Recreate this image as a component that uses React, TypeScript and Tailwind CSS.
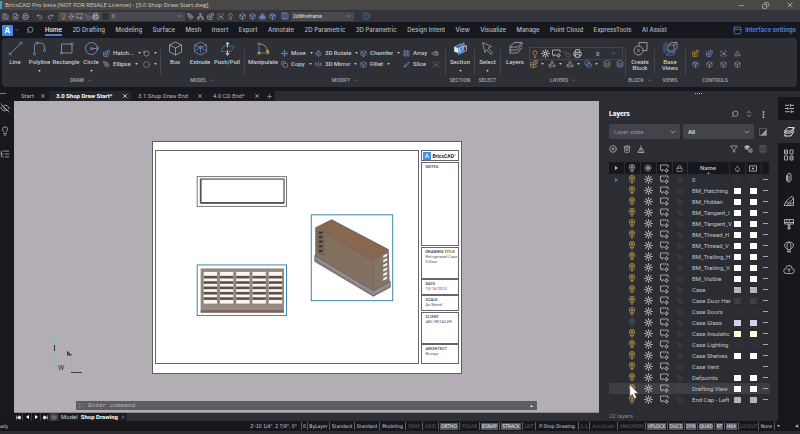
import React, { useState } from 'react';
import { clsx } from 'clsx';
import {
  Save, FileSearch, Printer, Undo2, Redo2, Lightbulb, Sun, LockOpen, Lock, Search, ChevronDown, ChevronsUpDown,
  PenTool, Network, Blocks, ScanSearch, Box, Boxes, Package, Columns3, CircleHelp, Minus, Copy, X, Plus,
  PanelTop, Move, Rotate3d, FlipHorizontal2, LayoutGrid, EyeOff,
  EllipsisVertical, CirclePlus, Trash2, Funnel, Layers, Droplet, SlidersHorizontal, ListTree, Paintbrush,
  Shapes, SkipBack, SkipForward, Slice, RotateCcw, Circle, Blend, MousePointer2, Sheet,
} from 'lucide-react';

type Icon = React.ComponentType<{ size?: number; className?: string; strokeWidth?: number }>;

const menuTabs = [
  'Home', '2D Drafting', 'Modeling', 'Surface', 'Mesh', 'Insert', 'Export', 'Annotate', '2D Parametric',
  '3D Parametric', 'Design Intent', 'View', 'Visualize', 'Manage', 'Point Cloud', 'ExpressTools', 'AI Assist',
];

interface LayerRow {
  name: string;
  color: string;
  off?: boolean;
}

const layers: LayerRow[] = [
  { name: '0', color: 'bg-[#303136]' },
  { name: 'BM_Hatching', color: 'bg-white' },
  { name: 'BM_Hidden', color: 'bg-white' },
  { name: 'BM_Tangent_I', color: 'bg-white' },
  { name: 'BM_Tangent_V', color: 'bg-white' },
  { name: 'BM_Thread_H', color: 'bg-white' },
  { name: 'BM_Thread_V', color: 'bg-white' },
  { name: 'BM_Trailing_H', color: 'bg-white' },
  { name: 'BM_Trailing_V', color: 'bg-white' },
  { name: 'BM_Visible', color: 'bg-white' },
  { name: 'Case', color: 'bg-[#b9b4b4]' },
  { name: 'Case Door Har', color: 'bg-[#3d3e43]' },
  { name: 'Case Doors', color: 'bg-[#303136]' },
  { name: 'Case Glass', color: 'bg-[#cdd3e2]', off: true },
  { name: 'Case Insulatic', color: 'bg-[#ffffd8]' },
  { name: 'Case Lighting', color: 'bg-[#303136]' },
  { name: 'Case Shelves', color: 'bg-white' },
  { name: 'Case Vent', color: 'bg-[#2d2e33]' },
  { name: 'Defpoints', color: 'bg-white' },
  { name: 'Drafting View', color: 'bg-white' },
  { name: 'End Cap - Left', color: 'bg-[#b9b1b1]' },
];

const statusItems = [
  { label: "2'-10 1/4\", 2 7/8\", 0\"", width: 'w-[56px]' },
  { label: '0', width: 'w-[6px]' },
  { label: 'ByLayer', width: 'w-[22px]' },
  { label: 'Standard', width: 'w-[25px]' },
  { label: 'Standard', width: 'w-[25px]' },
  { label: 'Modeling', width: 'w-[26px]' },
  { label: 'SNAP', width: 'w-[17px]', kind: 'off' },
  { label: 'GRID', width: 'w-[16px]', kind: 'off' },
  { label: 'ORTHO', width: 'w-[21px]', kind: 'on' },
  { label: 'POLAR', width: 'w-[20px]', kind: 'off' },
  { label: 'ESNAP', width: 'w-[20px]', kind: 'on' },
  { label: 'STRACK', width: 'w-[23px]', kind: 'on' },
  { label: 'LWT', width: 'w-[13px]', kind: 'off' },
  { label: 'P:Shop Drawing', width: 'w-[43px]' },
  { label: '1:1', width: 'w-[11px]', kind: 'off' },
  { label: 'AutoScale', width: 'w-[28px]', kind: 'off' },
  { label: 'ANNOMON', width: 'w-[28px]', kind: 'off' },
  { label: 'VPLOCK', width: 'w-[22px]', kind: 'on' },
  { label: 'DUCS', width: 'w-[17px]', kind: 'on' },
  { label: 'DYN', width: 'w-[13px]', kind: 'on' },
  { label: 'QUAD', width: 'w-[17px]', kind: 'on' },
  { label: 'RT', width: 'w-[10px]', kind: 'on' },
  { label: 'HKA', width: 'w-[14px]', kind: 'on' },
  { label: 'LOCKUT', width: 'w-[20px]', kind: 'off' },
  { label: 'None', width: 'w-[16px]' },
];

const Caret: React.FC<{ className?: string }> = ({ className }) => (
  <svg viewBox="0 0 4 3" className={clsx('h-[2px] w-[3px] shrink-0', className)} fill="currentColor">
    <path d="M0 0h4L2 3z" />
  </svg>
);

// Rectangle with a small sun in its corner (viewport freeze)
const ViewportIcon: React.FC<{ size?: number; className?: string }> = ({ size = 9, className }) => (
  <svg viewBox="0 0 18 18" width={size} height={size} className={className} fill="none" stroke="currentColor" strokeWidth="1.500">
    <path d="M8 12H4M4 12v3M4 12H1V2h15v5" />
    <circle cx="13" cy="13" r="2" />
    <path d="M13 8.500v1.500M13 16v1.500M8.500 13h1.500M16 13h1.500M10 10l1 1M15 15l1 1M10 16l1-1M15 11l1-1" />
  </svg>
);

const BulbIcon: React.FC<{ className?: string }> = ({ className }) => (
  <svg viewBox="0 0 16 20" className={clsx('mx-auto h-[9px] w-[8px]', className)} fill="none" stroke="currentColor" strokeWidth="1.700">
    <path d="M5 15c0-3-3-4-3-8a6 6 0 0 1 12 0c0 4-3 5-3 8zM6 18h4" />
    <path d="M8 14V9M5.500 7L8 9l2.500-2" />
    <circle cx="8" cy="6.500" r="2.500" />
  </svg>
);

// Padlock with an open shackle swung to the left
const UnlockIcon: React.FC<{ size?: number; className?: string }> = ({ size = 8, className }) => (
  <svg viewBox="0 0 18 18" width={size} height={size} className={className} fill="none" stroke="currentColor" strokeWidth="1.600">
    <path d="M7 8h9v8H7zM7 10V4H2v3M11.500 11v2" />
  </svg>
);

const PurgeIcon = () => (
  <svg viewBox="0 0 18 18" className="h-[8px] w-[8px]" fill="none" stroke="currentColor" strokeWidth="1.600">
    <path d="M9 1v7M6 8h6v3H6zM5 11l-3 6h14l-3-6M7 14v3M11 14v3" />
  </svg>
);

const LayerStackIcon = () => (
  <svg viewBox="0 0 20 18" className="h-[8px] w-[9px]" fill="none" stroke="currentColor" strokeWidth="1.400">
    <path d="M7 1l6 3-6 3-6-3zM1 7l6 3 3-1.500" fill="currentColor" />
    <path d="M11 9h7v7h-7zM13 12h3M13 14h3" />
  </svg>
);

const LogoMark: React.FC<{ className?: string }> = ({ className }) => (
  <svg viewBox="0 0 20 20" className={className}>
    <rect width="20" height="20" rx="2" fill="#3f8ce8" />
    <path d="M9.500 4L5.500 15M10.500 4l4 11M7.500 13.500l2.500-3 3 3.500" stroke="#fff" strokeWidth="1.900" fill="none" />
  </svg>
);

const glyph = 'mx-auto h-[15px] w-[15px]';

const LineGlyph = () => (
  <svg viewBox="0 0 30 30" className={glyph} fill="none" stroke="#9fa3ab" strokeWidth="1.400">
    <path d="M5 25L25 5" /><path d="M2 24h4v4H2zM24 2h4v4h-4z" stroke="#5d83c4" />
  </svg>
);
const PolylineGlyph = () => (
  <svg viewBox="0 0 30 30" className={glyph} fill="none" stroke="#9fa3ab" strokeWidth="1.400">
    <path d="M5 25V9a5 5 0 0 1 5-5h7a8 8 0 0 1 8 8v5" /><path d="M3 24h4v4H3zM23 17h4v4h-4zM8 2h4v4H8z" stroke="#5d83c4" />
  </svg>
);
const RectangleGlyph = () => (
  <svg viewBox="0 0 30 30" className={glyph} fill="none" stroke="#a4a7ae" strokeWidth="1.500">
    <path d="M5 6h21v18H5z" /><path d="M3 22h4v4H3zM24 4h4v4h-4z" stroke="#5d83c4" />
  </svg>
);
const CircleGlyph = () => (
  <svg viewBox="0 0 30 30" className={glyph} fill="none" stroke="#a4a7ae" strokeWidth="1.400">
    <circle cx="15" cy="15" r="12" /><path d="M15 15h11" /><path d="M13 13h4v4h-4zM25 13h4v4h-4z" stroke="#5d83c4" />
  </svg>
);
const BoxGlyph = () => (
  <svg viewBox="0 0 30 30" className={glyph} fill="none" stroke="#b9bcc2" strokeWidth="1.400">
    <path d="M15 2l12 6v14l-12 6-12-6V8zM3 8l12 6 12-6M15 14v14" />
  </svg>
);
const ExtrudeGlyph = () => (
  <svg viewBox="0 0 30 30" className={glyph} fill="none" stroke="#8590a8" strokeWidth="1.400">
    <path d="M15 2l12 6v14l-12 6-12-6V8zM3 8l12 6 12-6" /><path d="M15 24V9M11 13l4-4 4 4M3 20l12-6 12 6" stroke="#4f83dc" />
  </svg>
);
const PushGlyph = () => (
  <svg viewBox="0 0 30 30" className={glyph} fill="none" stroke="#3f8396" strokeWidth="1.500">
    <path d="M8 10h20l-6 11H2z" /><path d="M15 4v9M15 18v9M12 6l3-4 3 4zM12 25l3 4 3-4z" stroke="#dfe2e6" />
  </svg>
);
const ManipulateGlyph = () => (
  <svg viewBox="0 0 30 30" className={glyph} fill="none" strokeWidth="1.500">
    <path d="M6 24V5M3 8l3-5 3 5M6 24h19M22 21l5 3-5 3" stroke="#5f8fdc" />
    <path d="M8 6c8 0 14 6 15 15" stroke="#d6b545" />
    <path d="M4 22h4v4H4zM21 19h4v4h-4z" stroke="#d6b545" />
  </svg>
);
const SectionGlyph = () => (
  <svg viewBox="0 0 30 30" className={glyph} fill="none" stroke="#cfd3da" strokeWidth="1.400">
    <path d="M3 12l12-6 12 4v9l-12 6-12-4zM3 12l12 4 12-6M15 16v9" />
    <path d="M3 12l9 3v9l-9-3z" fill="#e4e6ea" stroke="none" />
    <path d="M11 11l11-8v17l-11 8z" fill="#3b83dd" fillOpacity=".75" stroke="#5f9fee" />
    <path d="M13 14l7-4v7l-7 5z" stroke="#dfe8f6" />
  </svg>
);
const SelectGlyph = () => (
  <svg viewBox="0 0 30 30" className={glyph} fill="none" stroke="#a3a6ad" strokeWidth="1.500">
    <path d="M5 3l18 8-7 3 9 10-3 3-9-10-3 6z" />
  </svg>
);
const LayersGlyph = () => (
  <svg viewBox="0 0 30 30" className={glyph} fill="none" stroke="#b4b7bd" strokeWidth="1.500">
    <path d="M12 3h16l-9 9H3zM6 12l-3 6h16l9-11v-4M6 18l-3 6h16l9-11" />
  </svg>
);
const CreateBlockGlyph = () => (
  <svg viewBox="0 0 30 30" className={glyph} fill="none" stroke="#b9bcc2" strokeWidth="1.500">
    <path d="M12 10V3h16v16h-8" /><circle cx="11" cy="19" r="9" /><path d="M9 17h4v4H9z" stroke="#5d83c4" />
  </svg>
);
const BaseViewsGlyph = () => (
  <svg viewBox="0 0 30 30" className={glyph} fill="none" stroke="#a9acb4" strokeWidth="1.400">
    <path d="M10 8h12v12H10zM10 8l6-5h12v12l-6 5M22 8l6-5" />
    <path d="M6 3l-4 4v16l4-4zM10 23h14l-4 5H6z" stroke="#5580d8" />
  </svg>
);

const BigTool: React.FC<{ label: string; width: string; caret?: boolean; children: React.ReactNode }> = ({ label, width, caret, children }) => (
  <button className={clsx('flex shrink-0 flex-col items-center', width)}>
    {children}
    <span className="mt-[3px] text-center font-medium leading-[6px]">{label}</span>
    {caret && <Caret className="mt-[5px]" />}
  </button>
);

const SmallTool: React.FC<{ icon: Icon; label?: string; caret?: boolean; tint?: string }> = ({ icon: I, label, caret, tint = 'text-[#7f9fd8]' }) => (
  <button className="flex h-[8px] items-center whitespace-nowrap font-medium">
    <I size={7} className={clsx('shrink-0', tint)} />
    {label && <span className="ml-[3px]">{label}</span>}
    {caret && <Caret className="ml-[4px]" />}
  </button>
);

const Group: React.FC<{ title: string; width: string; menu?: boolean; children: React.ReactNode }> = ({ title, width, menu, children }) => (
  <section className={clsx('flex h-[49px] shrink-0 flex-col pt-[3px]', width)}>
    <div className="flex flex-1 items-start">{children}</div>
    <h2 className="flex h-[11px] items-start justify-center gap-[3px] whitespace-nowrap text-[5px] font-medium leading-[8px] text-[#a7a9ae]">
      {title}
      {menu && <ChevronDown size={5} className="mt-[2px]" />}
    </h2>
  </section>
);

const Divider = () => <div className="mt-[11px] h-[26px] w-px shrink-0 bg-[#45464c]" />;

const TitleBar = () => (
  <header className="flex h-[10px] items-center bg-[#4a4846] text-[#d0cecc]">
    <div className="h-[8px] w-[2px] bg-[#3aa0c4]" />
    <h1 className="ml-[3px] flex-1 whitespace-nowrap font-['Open_Sans',sans-serif] text-[6px] leading-[8px]">
      BricsCAD Pro beta (NOT FOR RESALE License) - [3.0 Shop Draw Start.dwg]
    </h1>
    <div className="flex items-center gap-[17px] pr-[6px]">
      <button aria-label="Minimize"><Minus size={7} /></button>
      <button aria-label="Restore"><Copy size={7} className="-scale-x-100" /></button>
      <button aria-label="Close"><X size={8} /></button>
    </div>
  </header>
);

const QuickBar = () => (
  <div className="flex h-[12px] items-center bg-[#34353c] pl-[2px] text-[#b1b3b8]">
    <div className="flex items-center gap-[3px]">
      <Save size={7} /><FileSearch size={7} /><Printer size={7} />
    </div>
    <div className="ml-[7px] flex items-center gap-[4px]"><Undo2 size={7} /><Redo2 size={7} /></div>
    <div className="ml-[4px] flex h-[9px] w-[127px] items-center gap-px bg-[#48494f] pl-[2px] pr-[3px]">
      <Lightbulb size={7} className="text-[#cfa944]" /><Sun size={7} /><ViewportIcon size={7} />
      <UnlockIcon size={7} className="text-[#7a7b80]" /><Printer size={7} className="text-[#dcdde0]" />
      <span className="mx-[2px] h-[7px] w-[7px] bg-[#303136]" />
      <span className="flex-1 text-[5px]">0</span>
      <ChevronDown size={6} />
    </div>
    <div className="ml-[2px] flex items-center gap-[3px]">
      <PenTool size={7} /><Network size={7} /><Blocks size={7} /><ScanSearch size={7} />
      <Lightbulb size={7} className="text-[#d5a345]" />
    </div>
    <div className="ml-[5px] flex items-center gap-[3px]">
      <Box size={7} /><Box size={7} className="text-[#8fa9e6]" /><Boxes size={7} className="text-[#7d9de6]" /><Package size={7} className="text-[#8fa9e6]" />
    </div>
    <Columns3 size={8} className="ml-[5px] text-[#6f9fe8]" />
    <select aria-label="Visual style" className="ml-[2px] h-[9px] w-[63px] appearance-none bg-[#48494f] pl-[2px] text-[5px] font-medium leading-[9px] text-[#d0d1d4]">
      <option>2dWireframe</option>
    </select>
    <ChevronDown size={6} className="-ml-[8px]" />
    <CircleHelp size={8} className="ml-[10px] text-[#4c75b8]" />
  </div>
);

const MenuTabs: React.FC<{ active: string; onSelect: (t: string) => void }> = ({ active, onSelect }) => (
  <nav className="flex h-[16px] items-center bg-[#17181d] pl-[2px] pr-[4px] font-medium text-[#b9bbc0]">
    <LogoMark className="h-[11px] w-[11px] shrink-0" />
    <ChevronDown size={6} className="ml-px shrink-0 text-[#77797e]" />
    <Search size={8} className="ml-[6px] shrink-0 -scale-x-100" />
    <div className="ml-[11px] flex max-w-[622px] flex-1 justify-between">
      {menuTabs.map((tab) => (
        <button
          key={tab}
          onClick={() => onSelect(tab)}
          className={clsx(
            "h-[12px] whitespace-nowrap border-b-2 font-['Inter',sans-serif] leading-[9px]",
            tab === active ? 'border-[#4a7ed6] text-white' : 'border-transparent'
          )}
        >
          {tab}
        </button>
      ))}
    </div>
    <button className="ml-auto flex items-center gap-[3px] whitespace-nowrap font-['Inter',sans-serif] font-semibold text-[#4f86e8]">
      <PanelTop size={9} />
      Interface settings
    </button>
  </nav>
);

const Ribbon = () => (
  <div className="bg-[#17181d] pb-[4px] pl-[2px] pr-[3px]">
    <div className="flex rounded bg-[#2f3035] text-[#c9cace]">
      <Group title="DRAW" width="w-[158px]" menu>
        <BigTool label="Line" width="w-[26px]"><LineGlyph /></BigTool>
        <BigTool label="Polyline" width="w-[23px]" caret><PolylineGlyph /></BigTool>
        <BigTool label="Rectangle" width="w-[30px]"><RectangleGlyph /></BigTool>
        <BigTool label="Circle" width="w-[20px]" caret><CircleGlyph /></BigTool>
        <div className="grid grid-cols-[37px_14px] gap-x-[3px] gap-y-[3px] pl-[2px] pt-[8px]">
          <SmallTool icon={Blocks} label="Hatch..." caret />
          <SmallTool icon={RotateCcw} caret tint="text-[#b9bbc0]" />
          <SmallTool icon={PenTool} label="Ellipse" caret tint="text-[#a0a3aa]" />
          <SmallTool icon={Circle} caret tint="text-[#97999f]" />
        </div>
      </Group>
      <Divider />
      <Group title="MODEL" width="w-[83px]" menu>
        <BigTool label="Box" width="w-[28px]"><BoxGlyph /></BigTool>
        <BigTool label="Extrude" width="w-[22px]"><ExtrudeGlyph /></BigTool>
        <BigTool label="Push/Pull" width="w-[32px]"><PushGlyph /></BigTool>
      </Group>
      <Divider />
      <Group title="MODIFY" width="w-[200px]" menu>
        <BigTool label="Manipulate" width="w-[36px]"><ManipulateGlyph /></BigTool>
        <div className="grid grid-cols-[31px_42px_40px_26px_9px] gap-x-[3px] gap-y-[3px] pt-[8px]">
          <SmallTool icon={Move} label="Move" caret />
          <SmallTool icon={Rotate3d} label="3D Rotate" caret />
          <SmallTool icon={Box} label="Chamfer" caret />
          <SmallTool icon={LayoutGrid} label="Array" />
          <SmallTool icon={Paintbrush} tint="text-[#9fa2a8] rotate-[225deg]" />
          <SmallTool icon={Copy} label="Copy" caret />
          <SmallTool icon={FlipHorizontal2} label="3D Mirror" caret />
          <SmallTool icon={Box} label="Fillet" caret />
          <SmallTool icon={Slice} label="Slice" />
          <SmallTool icon={ScanSearch} tint="text-[#777a82]" />
        </div>
      </Group>
      <Divider />
      <Group title="SECTION" width="w-[28px]">
        <BigTool label="Section" width="w-full" caret><SectionGlyph /></BigTool>
      </Group>
      <Divider />
      <Group title="SELECT" width="w-[25px]">
        <BigTool label="Select" width="w-full" caret><SelectGlyph /></BigTool>
      </Group>
      <Divider />
      <Group title="LAYERS" width="w-[124px]" menu>
        <BigTool label="Layers" width="w-[28px]"><LayersGlyph /></BigTool>
        <div className="w-[94px] pt-[6px]">
          <div className="flex h-[13px] items-center gap-[2px] border border-[#45464c] px-px">
            <Lightbulb size={8} className="text-[#cfa944]" /><Sun size={9} strokeWidth={3} /><ViewportIcon size={9} />
            <UnlockIcon size={8} className="text-[#5c5d63]" /><Printer size={9} className="text-[#e2e3e6]" />
            <span className="ml-[12px] flex-1">0</span>
            <ChevronDown size={5} className="mr-[5px]" />
          </div>
          <div className="flex items-center gap-[4px] pl-px">
            {[Blocks, Shapes, Shapes, Blend].map((I, i) => (
              <span key={i} className="flex items-center gap-[3px]">
                <I size={8} className={['text-[#c29a62]', 'text-[#a3a7ae]', 'text-[#a3a7ae]', 'text-[#5d8be0]'][i]} /><Caret />
              </span>
            ))}
            <div className="flex gap-[5px] pl-px">
              <Layers size={8} className="text-[#7aa88a]" /><Layers size={8} className="text-[#7a9cd8]" />
            </div>
          </div>
        </div>
      </Group>
      <Divider />
      <Group title="BLOCK" width="w-[28px]" menu>
        <BigTool label="Create Block" width="w-full"><CreateBlockGlyph /></BigTool>
      </Group>
      <Divider />
      <Group title="VIEWS" width="w-[30px]">
        <BigTool label="Base Views" width="w-full"><BaseViewsGlyph /></BigTool>
      </Group>
      <Divider />
      <Group title="CONTROLS" width="w-[58px]">
        <div className="grid w-full grid-cols-4 justify-items-center gap-y-[3px] pl-[2px] pt-[8px]">
          <SmallTool icon={Blocks} tint="text-[#d0a23e]" />
          <SmallTool icon={Blocks} />
          <SmallTool icon={ScanSearch} tint="text-[#aeb6c8]" />
          <SmallTool icon={Shapes} tint="text-[#8f9298]" />
          <SmallTool icon={Package} />
          <SmallTool icon={Box} tint="text-[#9da0a6]" />
          <SmallTool icon={Box} tint="text-[#9da0a6]" />
          <SmallTool icon={Box} tint="text-[#9da0a6]" />
        </div>
      </Group>
    </div>
  </div>
);

const docTabs = [
  { name: 'Start', width: 'w-[35px]' },
  { name: '3.0 Shop Draw Start*', width: 'w-[82px]', active: true },
  { name: '3.1 Shop Draw End', width: 'w-[75px]' },
  { name: '4.0 CD End*', width: 'w-[57px]' },
];

const DocumentTabs = () => (
  <div className="flex h-[10px] bg-[#2b2c32] text-[#b4b5b9]">
    {docTabs.map((tab) => (
      <div
        key={tab.name}
        className={clsx(
          'flex items-center justify-between whitespace-nowrap pl-[7px] pr-[3px]',
          tab.width,
          tab.active ? 'bg-[#26272c] font-bold text-white' : 'bg-[#1a1a1e]'
        )}
      >
        {tab.name}
        <button aria-label={'Close ' + tab.name}><X size={6} strokeWidth={3} /></button>
      </div>
    ))}
    <button aria-label="New tab" className="flex w-[12px] items-center justify-center bg-[#1a1a1e]"><Plus size={7} /></button>
  </div>
);

const doorColumns = [0, 1, 2, 3, 4];
const shelfLevels = [0, 1, 2, 3, 4, 5];

const SheetViews = () => (
  <svg viewBox="0 0 264 213" className="h-full w-full" fill="none">
    {/* plan view */}
    <rect x="41.500" y="25.500" width="90" height="30" stroke="#77757a" />
    <rect x="45" y="28" width="84" height="24" stroke="#6a686d" strokeWidth="1.400" />
    <path d="M45 52V28M45 52h84" stroke="#57555a" strokeWidth="1.600" />
    {/* front elevation */}
    <rect x="41.500" y="114.500" width="90" height="51" stroke="#3a86ae" />
    <rect x="45" y="118" width="84" height="45" fill="#93857f" />
    {doorColumns.map((c) => (
      <g key={c}>
        <rect x={48 + c * 16.4} y="121.500" width="13.500" height="32" fill="#f7f5ec" />
        {shelfLevels.slice(0, 5).map((s) => (
          <rect key={s} x={48 + c * 16.4} y={125.5 + s * 5.4} width="13.500" height="2.600" fill="#574f4a" />
        ))}
      </g>
    ))}
    <path d="M45 155.500h84M45 158h84" stroke="#a3938b" strokeWidth=".800" />
    <path d="M45 161h84" stroke="#7b544a" strokeWidth="1.300" />
    {/* isometric view */}
    <rect x="156.500" y="64" width="82" height="86.500" stroke="#3a86ae" />
    <path d="M161 77l16-8 57 30-15 12z" fill="#87684e" stroke="#74645a" />
    <path d="M161 77l58 34v32l-58-35z" fill="#84705f" stroke="#716967" />
    <path d="M219 111l15-12 1 37-16 9z" fill="#837468" stroke="#716967" />
    <path d="M162 79l8 5v22l-8-4z" fill="#75655a" />
    {shelfLevels.slice(0, 5).map((s) => (
      <path key={s} d={`M164 ${81 + s * 4.6}h5l-4 2.500z`} fill="#2f2a28" />
    ))}
    {shelfLevels.map((s) => (
      <path key={s} d={`M229 ${105 + s * 4.6}l4-2v2.500l-4 2z`} fill="#f2efe8" />
    ))}
    <path d="M175 86v30M187 93v30M199 100v30M210 107v29" stroke="#7b6e68" />
    <path d="M160 105l59 35 17-9v6l-17 9-59-35z" fill="#8a8081" stroke="#655f60" strokeWidth=".800" />
    <path d="M160 107l59 36 17-9" stroke="#b1a7a6" strokeWidth=".700" />
  </svg>
);

const TitleBlock = () => {
  const cell = 'border border-[#68666b] px-[4px] text-[4px] leading-[5px] text-[#55535a]';
  const head = 'block whitespace-nowrap font-medium text-[#333138]';
  return (
    <div className="flex w-[38px] flex-col">
      <div className="flex h-[11px] items-center gap-[2px] border border-[#68666b] pl-px">
        <LogoMark className="h-[8px] w-[8px] shrink-0" />
        <span className="text-[5px] font-bold leading-[6px] text-[#2b2a30]">BricsCAD°</span>
      </div>
      <div className={clsx(cell, 'mt-px h-[84px] pt-px')}><b className={head}>NOTES:</b></div>
      <div className={clsx(cell, 'mt-px h-[32px] pt-px')}>
        <b className={head}>DRAWING TITLE</b><span className="block whitespace-nowrap">Refrigerated Case</span>5-Door
      </div>
      <div className={clsx(cell, 'h-[16px] pt-px')}><b className={head}>DATE</b>10/16/2023</div>
      <div className={clsx(cell, 'h-[16px] pt-px')}><b className={head}>SCALE</b>As Noted</div>
      <div className={clsx(cell, 'mt-px h-[32px] pt-px')}><b className={head}>CLIENT</b><span className="whitespace-nowrap">ABC RETAILER</span></div>
      <div className={clsx(cell, 'flex-1 pt-px')}><b className={head}>ARCHITECT</b>Bricsys</div>
    </div>
  );
};

const DrawingCanvas = () => (
  <main className="relative flex flex-1 items-start justify-center bg-[#b3aeb3] pt-[40px]">
    <div className="flex h-[233px] w-[310px] gap-[2px] border border-[#5f5d62] bg-white pb-[9px] pl-[2px] pr-[2px] pt-[8px]">
      <div className="min-w-0 flex-1 border border-[#68666b]"><SheetViews /></div>
      <TitleBlock />
    </div>
    {/* UCS icon */}
    <svg viewBox="0 0 32 36" className="absolute bottom-[38px] left-[37px] h-[36px] w-[32px]" fill="none">
      <path d="M3.500 0v34M20.500 19v15" stroke="#7fbfb2" strokeWidth=".800" />
      <path d="M3 34.500h17M3 12.500h15M22 35l8 1M9 3h10" stroke="#cfa5ab" strokeWidth=".600" />
      <path d="M3.500 7v6M20 34.500h11M16.500 14l3.500 3h-3.500z" stroke="#3c3a40" strokeWidth="1.100" />
      <text x="7" y="32" fontSize="7" fill="#333138" fontFamily="Roboto, sans-serif">W</text>
    </svg>
    <div className="absolute inset-x-[62px] bottom-[2px] flex h-[9px] items-center bg-[#5f5d63] pl-[2px] pr-[4px] font-['Liberation_Mono',monospace] text-[6px] text-[#b9b7bc]">
      <label htmlFor="command" className="mr-[3px] leading-[8px]">¦:</label>
      <input id="command" placeholder="Enter command" className="h-[8px] flex-1 bg-transparent italic outline-none placeholder:text-[#b9b7bc]" />
      <Caret className="rotate-180 text-white" />
    </div>
  </main>
);

const LayoutTabs = () => (
  <div className="flex h-[9px] items-center border-t border-[#8d8b90] bg-[#303136] text-[#d0d0d4]">
    {[SkipBack, SkipBack, SkipForward, SkipForward].map((I, i) => (
      <button key={i} aria-label="Switch layout" className="flex h-[8px] w-[9px] items-center justify-center border-r border-[#3c3d42] bg-[#17181c] text-white">
        {i === 0 || i === 3 ? <I size={5} className="fill-current" strokeWidth={3} /> : <Caret className={i === 1 ? 'scale-150 rotate-90' : 'scale-150 -rotate-90'} />}
      </button>
    ))}
    <Sheet size={6} className="ml-px text-[#8e9096]" />
    <div className="ml-[2px] flex h-[8px] items-center gap-[3px] bg-[#1c1d21] px-[2px] leading-[8px]">
      <button>Model</button>
      <button className="font-bold text-white">Shop Drawing</button>
      <button aria-label="Add layout"><Plus size={4} /></button>
    </div>
  </div>
);

const LayersPanel = () => (
  <aside className="flex w-[179px] shrink-0 flex-col bg-[#2c2d32] pl-[10px] pr-[8px] text-[#c3c4c8]">
    <div className="mx-auto mt-[2px] flex gap-px pl-[18px]">
      {[0, 1, 2, 3].map((i) => <i key={i} className="h-px w-px bg-[#c3c4c8]" />)}
    </div>
    <div className="mt-[15px] flex h-[10px] items-center">
      <h2 className="flex-1 text-[7px] font-bold leading-[10px] text-white">Layers</h2>
      <div className="flex items-center gap-[6px] pr-[2px]">
        <button aria-label="Search layers"><Search size={8} className="-scale-x-100" /></button>
        <button aria-label="Sort"><ChevronsUpDown size={8} /></button>
        <button aria-label="More"><EllipsisVertical size={9} strokeWidth={3} /></button>
      </div>
    </div>
    <div className="mt-[5px] flex h-[15px] items-center">
      <div className="relative flex w-[71px] items-center">
        <select aria-label="Layer state" className="h-[15px] w-full appearance-none rounded-xs bg-[#43444a] pl-[5px] text-[6px] leading-[15px] text-[#8e9095]">
          <option>Layer state</option>
        </select>
        <ChevronDown size={8} className="pointer-events-none absolute right-[3px]" />
      </div>
      <div className="relative ml-[3px] flex w-[71px] items-center">
        <select aria-label="Layer filter" className="h-[15px] w-full appearance-none rounded-xs bg-[#43444a] pl-[5px] text-[6px] font-medium leading-[15px] text-[#e3e3e6]">
          <option>All</option>
        </select>
        <ChevronDown size={8} className="pointer-events-none absolute right-[3px]" />
      </div>
      <svg viewBox="0 0 16 16" className="ml-[5px] h-[8px] w-[8px]" fill="none" stroke="#85878c"><path d="M1 1h14v14H1z" /><path d="M15 3v12H3z" fill="#9b9da2" /></svg>
    </div>
    <div className="mt-[5px] flex h-[10px] items-center gap-[6px]">
      <button aria-label="New layer"><CirclePlus size={8} /></button>
      <button aria-label="Delete layer"><Trash2 size={8} /></button>
      <button aria-label="Purge"><PurgeIcon /></button>
      <div className="ml-auto flex items-center gap-[6px] pr-[3px]">
        <button aria-label="Filter"><Funnel size={8} /></button>
        <button aria-label="Layer groups"><LayerStackIcon /></button>
        <button aria-label="Select by layer"><Columns3 size={8} className="text-[#6d6f75]" /></button>
      </div>
    </div>
    <table className="mt-[8px] w-full table-fixed border-collapse text-left">
      <colgroup>
        <col className="w-[15px]" /><col className="w-[16px]" /><col className="w-[16px]" /><col className="w-[16px]" />
        <col className="w-[15px]" /><col className="w-[42px]" /><col className="w-[16px]" /><col className="w-[16px]" /><col />
      </colgroup>
      <thead>
        <tr className="h-[12px] bg-[#17181c] [&>th]:border-r [&>th]:border-[#2c2d32] [&>th]:p-0">
          <th><Caret className="mx-auto scale-150 -rotate-90" /></th>
          <th><BulbIcon className="text-[#b3b4b8]" /></th>
          <th><Sun size={8} strokeWidth={3} className="mx-auto" /></th>
          <th><ViewportIcon size={9} className="mx-auto" /></th>
          <th><Lock size={7} className="mx-auto" /></th>
          <th className="text-center font-medium leading-[8px]">
            Name<Caret className="mx-auto -mb-[2px] rotate-180 text-[#5fa0e8]" />
          </th>
          <th><Droplet size={7} className="mx-auto" /></th>
          <th>
            <svg viewBox="0 0 18 16" className="mx-auto h-[7px] w-[8px]" fill="none" stroke="currentColor" strokeWidth="1.800">
              <path d="M1 2h16v12H1z" /><path d="M9 5v6M6 8h6" />
            </svg>
          </th>
          <th />
        </tr>
      </thead>
      <tbody>
        {layers.map((layer, i) => (
          <tr key={layer.name} className={clsx('h-[11px] [&>td]:p-0', i === 19 && 'bg-[#3e3f45]')}>
            <td>{i === 0 && <Caret className="mx-auto scale-150 -rotate-90 text-[#3f86e0]" />}</td>
            <td className="relative">
              <BulbIcon className={layer.off ? 'text-[#55575e]' : 'text-[#c9a04c]'} />
              {i === 19 && (
                <svg viewBox="0 0 12 18" className="absolute left-[5px] top-px z-10 h-[15px] w-[10px]">
                  <path d="M1 1v14l3-3 2.500 5.500 2.500-1.200L6.500 11H11z" fill="#fff" stroke="#4a4a4e" strokeWidth=".500" />
                </svg>
              )}
            </td>
            <td><Sun size={9} strokeWidth={3} className="mx-auto" /></td>
            <td><ViewportIcon size={9} className="mx-auto" /></td>
            <td><UnlockIcon size={7} className="mx-auto text-[#4b4c52]" /></td>
            <td><span className="ml-[5px] block whitespace-nowrap leading-[9px]">{layer.name}</span></td>
            <td><i className={clsx('mx-auto block h-[6px] w-[7px]', layer.color)} /></td>
            <td><i className={clsx('mx-auto block h-[6px] w-[7px]', layer.color)} /></td>
            <td><i className="ml-[2px] block h-px w-[5px] bg-[#a8a9ad]" /></td>
          </tr>
        ))}
      </tbody>
    </table>
    <p className="mt-auto pb-px text-[#85878c]">22 layers</p>
  </aside>
);

const StripIcon: React.FC<{ children: React.ReactNode }> = ({ children }) => (
  <svg viewBox="0 0 24 24" className="h-[12px] w-[12px]" fill="none" stroke="currentColor" strokeWidth="1.700" strokeLinejoin="round">
    {children}
  </svg>
);

const sideIcons = [
  <SlidersHorizontal size={11} />,
  <StripIcon><path d="M10 3h12l-6 7H3zM5 10l-2 4h13l6-8V3M5 15l-2 5h13l6-10" /></StripIcon>,
  <StripIcon><path d="M3 2h6v8H3zM14 2h6v8h-6zM3 14h6v8H3zM14 14h6v8h-6zM3 6h6M14 18h6" /></StripIcon>,
  <StripIcon><path d="M12 7v9a1.500 1.500 0 0 1-3 0V6a3.500 3.500 0 0 1 7 0v11a5 5 0 0 1-9 0V7" /></StripIcon>,
  <StripIcon><path d="M2 21l4-8L16 3l5 2v16zM6 13l5 3 10-9M11 16l-3 5M14 21v-5h7" /></StripIcon>,
  <StripIcon><path d="M3 3h18v9H3zM3 9h18M8 3v4M13 3v4M10 12v3h4v-3M12 15v6M10 18h4v4h-4z" /></StripIcon>,
  <StripIcon><path d="M9 17C6 14 3 12 3 8c0-3 4-6 9-6s9 3 9 6c0 4-3 6-6 9zM9 17C8 12 7 5 12 2c5 3 4 10 3 15M9 20h6v2H9z" /></StripIcon>,
  <StripIcon><path d="M7 19a5 5 0 0 1-1-10 6 6 0 0 1 12 0 5 5 0 0 1-1 10zM12 16v-6M9 12l3-3 3 3" /></StripIcon>,
];

const SideStrip = () => (
  <div className="flex w-[22px] shrink-0 flex-col bg-[#17181c] text-[#bdbec2]">
    <div className="h-[6px] bg-[#2c2d32]" />
    {sideIcons.map((icon, i) => (
      <button key={i} aria-label={'Panel ' + (i + 1)} className={clsx('flex h-[23px] w-full items-center justify-center', i === 1 && 'bg-[#2c2d32] text-white')}>
        {icon}
      </button>
    ))}
  </div>
);

const LeftDock = () => (
  <div className="flex w-[14px] shrink-0 flex-col bg-[#19191d] text-[#aeb0b4]">
    <div className="mt-[2px] h-px w-[6px] bg-[#77787c]" />
    {[EyeOff, Lightbulb, ListTree].map((I, i) => (
      <button key={i} aria-label={'Dock ' + (i + 1)} className="flex h-[23px] items-center pt-[5px]"><I size={10} strokeWidth={2} /></button>
    ))}
  </div>
);

const StatusBar = () => (
  <footer className="border-b-[3px] border-[#2d2d32] bg-[#17171b] font-['DejaVu_Sans_Condensed','DejaVu_Sans',sans-serif] text-[5px] text-[#d2d2d6]">
    <div className="flex h-[10px] items-center">
      <span className="flex-1">ady</span>
      {statusItems.map((item, i) => (
        <button
          key={i}
          className={clsx('h-[8px] shrink-0 whitespace-nowrap border-r border-[#5c5c61] text-center leading-[8px]', item.width)}
        >
          <span
            className={clsx(
              'flex h-[7px] items-center justify-center leading-[7px]',
              item.kind === 'on' && 'mx-px bg-[#57575d] text-[#f0f0f2]',
              item.kind === 'off' && 'text-[#5f6066]'
            )}
          >
            {item.label}
          </span>
        </button>
      ))}
      <Caret className="ml-[2px] mr-[15px]" />
      <MousePointer2 size={4} className="mr-px -scale-100 fill-current" />
    </div>
  </footer>
);

const App: React.FC = () => {
  const [tab, setTab] = useState('Home');

  return (
    <div className="flex min-h-screen flex-col overflow-hidden bg-[#17181d] font-['Roboto',sans-serif] text-[6px] leading-[8px]">
      <TitleBar />
      <QuickBar />
      <MenuTabs active={tab} onSelect={setTab} />
      <Ribbon />
      <div className="flex flex-1">
        <LeftDock />
        <div className="flex min-w-0 flex-1 flex-col">
          <DocumentTabs />
          <DrawingCanvas />
          <LayoutTabs />
        </div>
        <LayersPanel />
        <SideStrip />
      </div>
      <StatusBar />
    </div>
  );
};

export default App;
